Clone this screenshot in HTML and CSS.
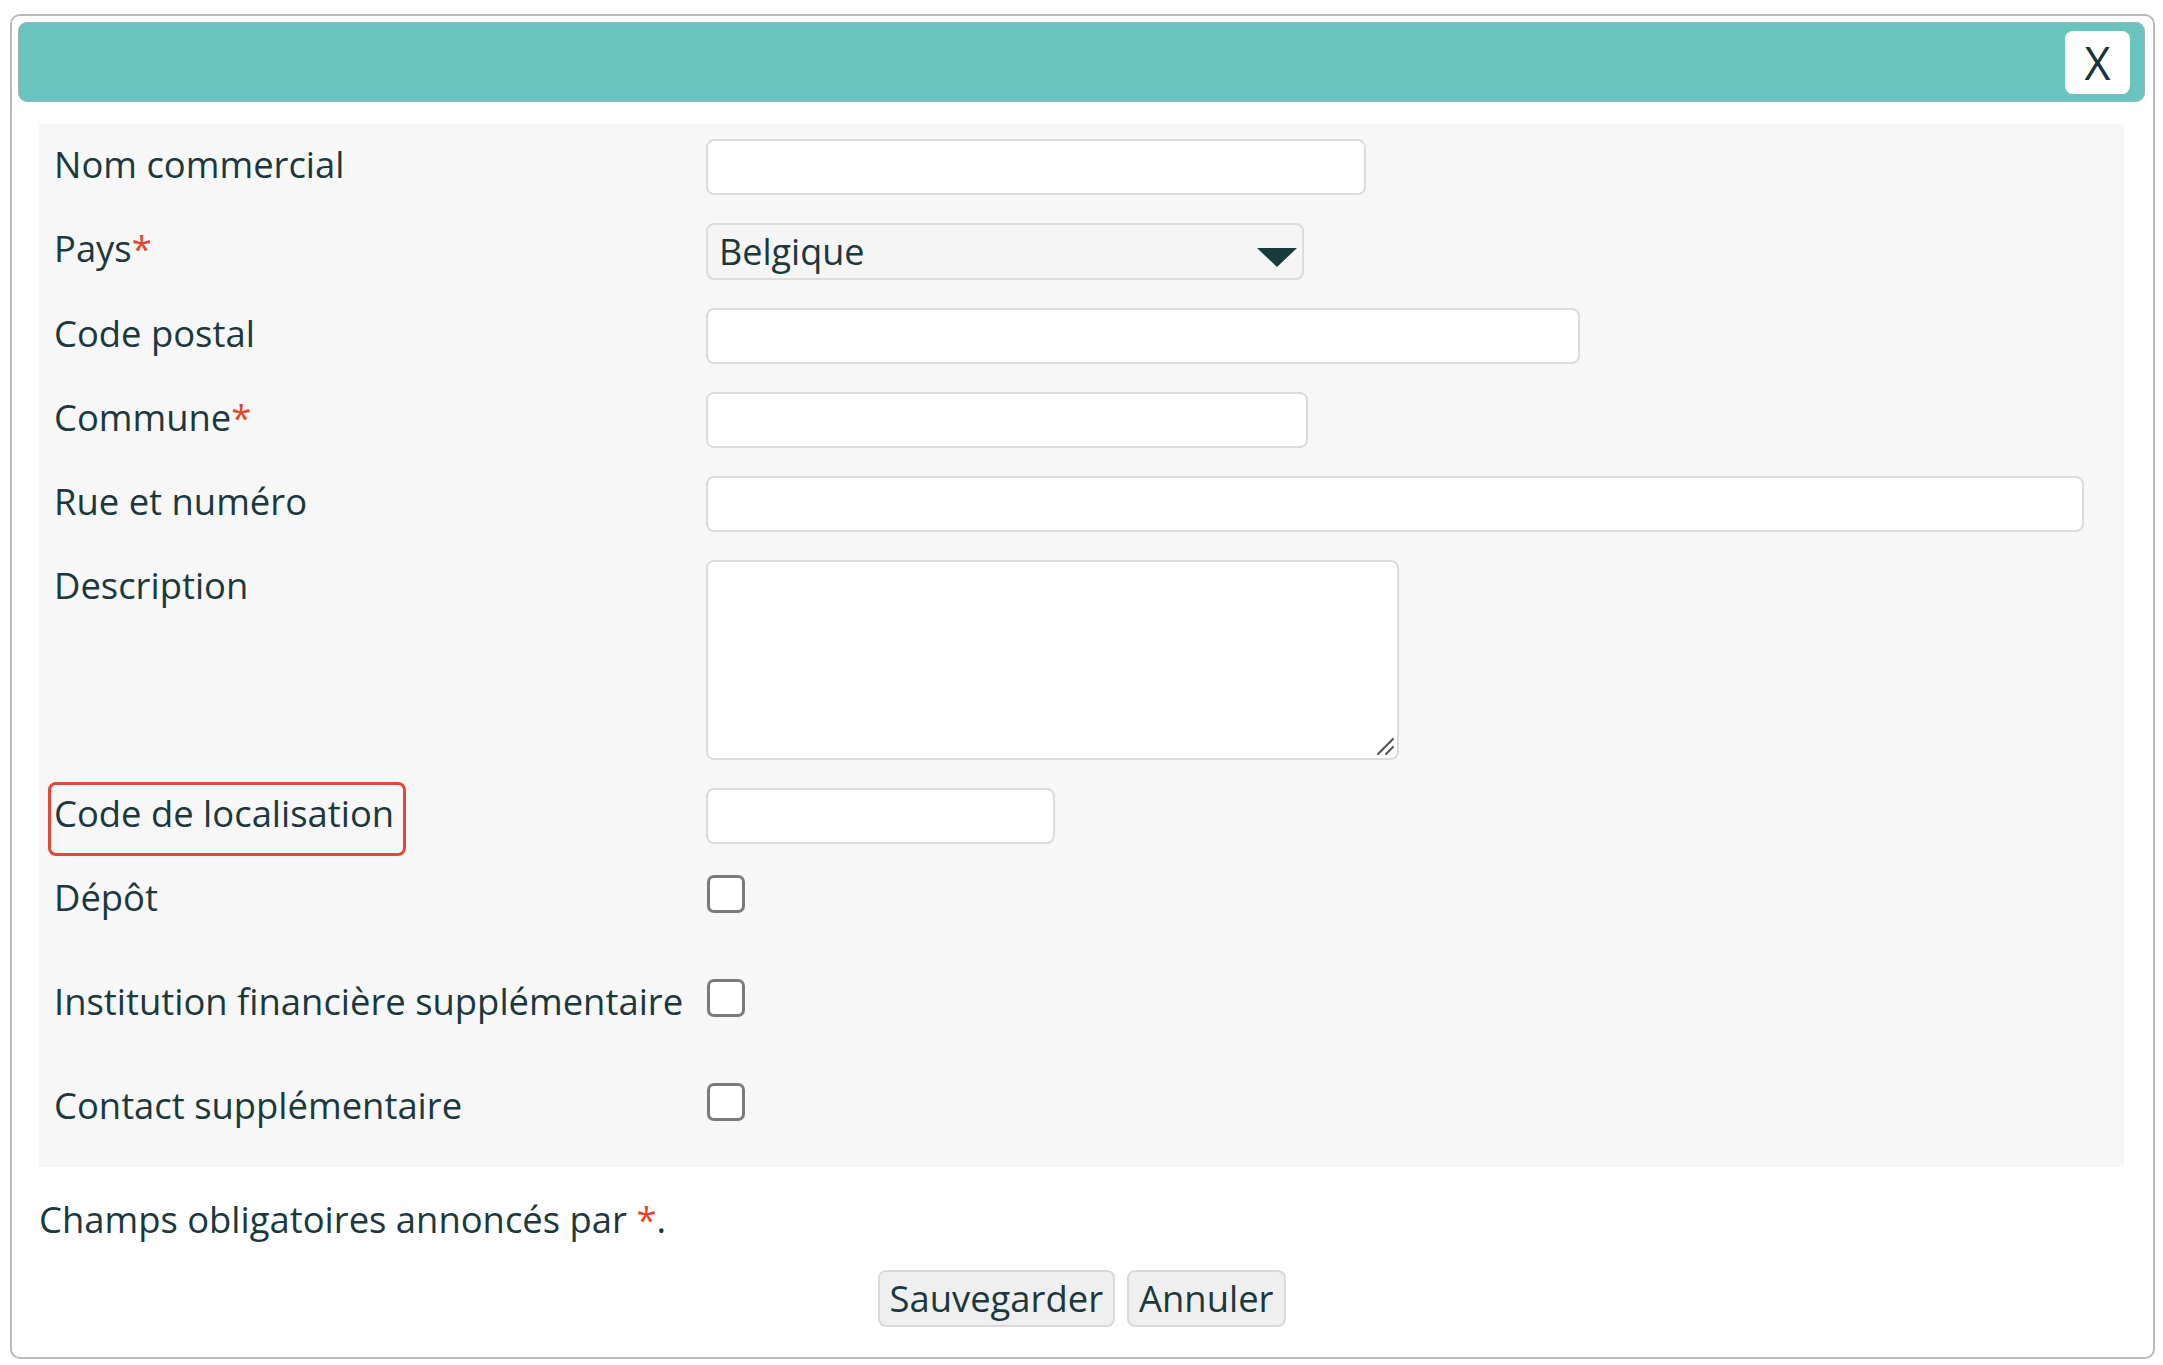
FILE: index.html
```html
<!DOCTYPE html>
<html lang="fr">
<head>
<meta charset="utf-8">
<title>Nouvelle adresse</title>
<link rel="stylesheet" href="styles.css">
</head>
<body>
<div class="dialog">
  <div class="titlebar">
    <button class="close" type="button">X</button>
  </div>
  <div class="content">
    <div class="form">
      <div class="label">Nom commercial</div>
      <div class="field"><input class="input w-nom" type="text"></div>

      <div class="label">Pays<span class="req">*</span></div>
      <div class="field">
        <div class="select-wrap">
          <select class="select"><option>Belgique</option></select>
          <svg class="arrow" viewBox="0 0 40 20" width="40" height="20"><polygon points="0,0 40,0 20,19" fill="#183b3c"/></svg>
        </div>
      </div>

      <div class="label">Code postal</div>
      <div class="field"><input class="input w-cp" type="text"></div>

      <div class="label">Commune<span class="req">*</span></div>
      <div class="field"><input class="input w-commune" type="text"></div>

      <div class="label">Rue et numéro</div>
      <div class="field"><input class="input w-rue" type="text"></div>

      <div class="label">Description</div>
      <div class="field">
        <div class="textarea-wrap">
          <textarea class="textarea"></textarea>
          <svg class="grip" viewBox="0 0 20 20" width="20" height="20">
            <line x1="3" y1="18" x2="18" y2="3" stroke="#555" stroke-width="2.2" stroke-linecap="round"/>
            <line x1="11" y1="18" x2="18" y2="11" stroke="#555" stroke-width="2.2" stroke-linecap="round"/>
          </svg>
        </div>
      </div>

      <div class="label"><span class="highlight">Code de localisation</span></div>
      <div class="field"><input class="input w-loc" type="text"></div>

      <div class="label check-row">Dépôt</div>
      <div class="field check-row"><input class="check" type="checkbox"></div>

      <div class="label check-row">Institution financière supplémentaire</div>
      <div class="field check-row"><input class="check" type="checkbox"></div>

      <div class="label check-row">Contact supplémentaire</div>
      <div class="field check-row"><input class="check" type="checkbox"></div>
    </div>
    <p class="note">Champs obligatoires annoncés par <span class="req">*</span>.</p>
    <div class="actions">
      <button class="btn" type="button">Sauvegarder</button>
      <button class="btn" type="button">Annuler</button>
    </div>
  </div>
</div>
</body>
</html>
```
FILE: styles.css
```css
* { box-sizing: border-box; }

html, body {
  margin: 0;
  padding: 0;
  background: #ffffff;
}

body {
  font-family: "Open Sans", "Noto Sans", sans-serif;
  font-size: 36.4px;
  color: #1b383d;
}

.dialog {
  margin: 14px 0 0 10px;
  width: 2145px;
  border: 2px solid #b9b9b9;
  border-radius: 10px;
  padding: 6px 8px 30px 6px;
  background: #ffffff;
}

.titlebar {
  height: 80px;
  background: #69c3bf;
  border: 1px solid #9fb3b2;
  border-radius: 9px;
  display: flex;
  justify-content: flex-end;
  align-items: center;
  padding-right: 14px;
}

.close {
  width: 65px;
  height: 63px;
  background: #ffffff;
  border: none;
  border-radius: 8px;
  font-family: "Open Sans", "Noto Sans", sans-serif;
  font-size: 45px;
  line-height: 1;
  color: #1a3338;
  padding: 0;
  display: flex;
  align-items: center;
  justify-content: center;
}

.content {
  padding: 22px 21px 0 21px;
}

.form {
  background: #f7f7f7;
  display: grid;
  grid-template-columns: 652px 1fr;
  row-gap: 28px;
  padding: 15px 15px 11px 15px;
}

.label {
  line-height: 49px;
  padding-top: 1px;
  white-space: nowrap;
}

.field {
  display: flex;
  align-items: flex-start;
}

.req {
  color: #e6432b;
}

.input,
.textarea,
.select {
  font-family: "Open Sans", "Noto Sans", sans-serif;
  font-size: 36px;
  color: #1b383d;
  border: 2px solid #dcdcdc;
  border-radius: 8px;
  background: #ffffff;
  outline: none;
}

.input {
  height: 56px;
  padding: 0 11px;
}

.w-nom { width: 660px; }
.w-cp { width: 874px; }
.w-commune { width: 602px; }
.w-rue { width: 1378px; }
.w-loc { width: 349px; }

.textarea-wrap {
  position: relative;
  width: 693px;
  height: 200px;
}

.textarea {
  width: 100%;
  height: 100%;
  resize: none;
  padding: 6px 11px;
  display: block;
}

.grip {
  position: absolute;
  right: 4px;
  bottom: 4px;
  pointer-events: none;
}

.select-wrap {
  position: relative;
  width: 598px;
  height: 57px;
}

.select {
  appearance: none;
  -webkit-appearance: none;
  width: 100%;
  height: 100%;
  background: #f5f5f5;
  padding: 0 60px 0 11px;
  line-height: 53px;
}

.arrow {
  position: absolute;
  right: 7px;
  top: 25px;
  pointer-events: none;
}

.highlight {
  position: relative;
  display: inline-block;
}

.highlight::after {
  content: "";
  position: absolute;
  left: -6px;
  right: -12px;
  top: -7px;
  bottom: -18px;
  border: 3px solid #e24a38;
  border-radius: 8px;
  pointer-events: none;
}

.check-row {
  min-height: 76px;
}

.check {
  appearance: none;
  -webkit-appearance: none;
  width: 38px;
  height: 38px;
  margin: 3px 0 0 1px;
  border: 3px solid #7a7a7a;
  border-radius: 7px;
  background: #ffffff;
}

.note {
  margin: 28px 0 0 0;
  line-height: 49px;
}

.actions {
  margin-top: 26px;
  display: flex;
  justify-content: center;
  gap: 12px;
}

.btn {
  height: 57px;
  font-family: "Open Sans", "Noto Sans", sans-serif;
  font-size: 36.4px;
  color: #1b383d;
  background: #efefef;
  border: 2px solid #dadada;
  border-radius: 8px;
  padding: 0 10px;
  line-height: 1;
}
```
